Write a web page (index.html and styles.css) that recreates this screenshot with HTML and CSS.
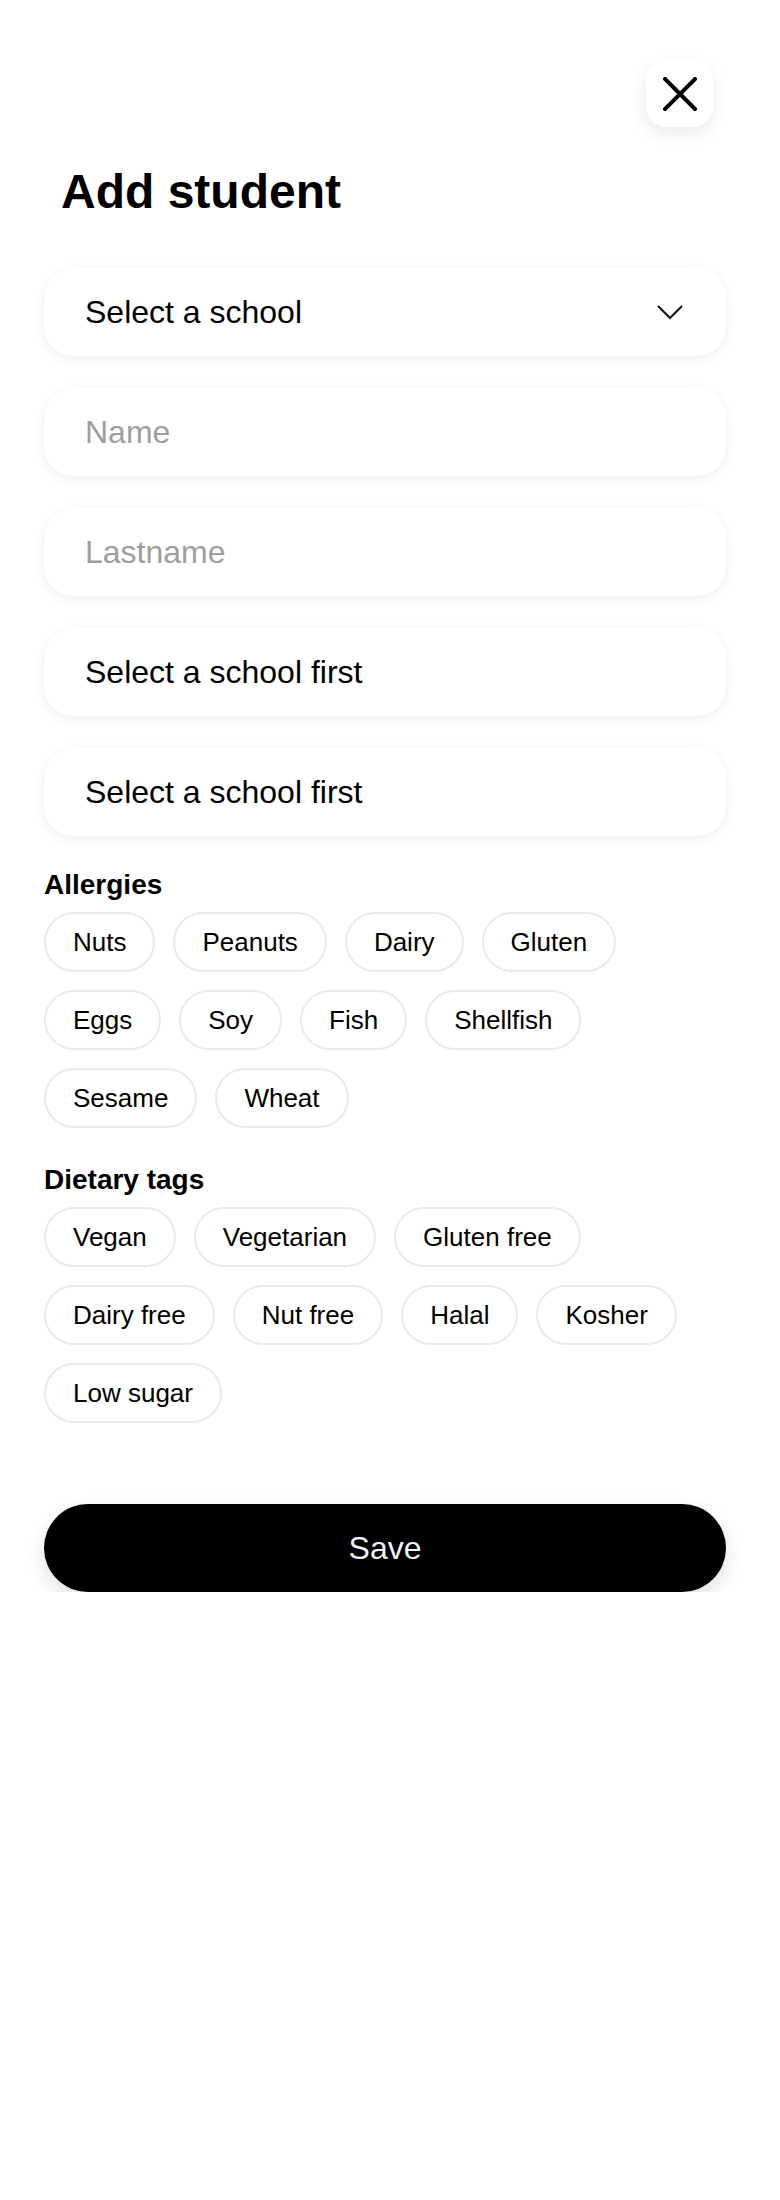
FILE: index.html
```html
<!DOCTYPE html>
<html lang="en">
<head>
    <meta charset="UTF-8">
    <meta name="viewport" content="width=device-width, initial-scale=1.0">
    <title>Add student</title>
    <link rel="stylesheet" href="styles.css">
</head>
<body>

    <!-- Top bar with close button -->
    <div class="top-bar">
        <button class="close-button" type="button" aria-label="Close">
            <svg width="34" height="34" viewBox="0 0 34 34" fill="none" stroke="#000" stroke-width="4" stroke-linecap="square">
                <path d="M2 2 L32 32 M32 2 L2 32"/>
            </svg>
        </button>
    </div>

    <h1 class="page-title">Add student</h1>

    <form class="student-form">
        <div class="field-list">
            <div class="field field-select">
                <span>Select a school</span>
                <svg class="chevron" width="26" height="15" viewBox="0 0 26 15" fill="none" stroke="#111" stroke-width="2">
                    <path d="M1 1 L13 13 L25 1"/>
                </svg>
            </div>
            <input class="field field-input" type="text" name="name" placeholder="Name">
            <input class="field field-input" type="text" name="lastname" placeholder="Lastname">
            <div class="field"><span>Select a school first</span></div>
            <div class="field"><span>Select a school first</span></div>
        </div>

        <!-- Allergies -->
        <div class="tag-section allergies">
            <h2 class="tag-title">Allergies</h2>
            <div class="tag-list">
                <span class="tag">Nuts</span>
                <span class="tag">Peanuts</span>
                <span class="tag">Dairy</span>
                <span class="tag">Gluten</span>
                <span class="tag">Eggs</span>
                <span class="tag">Soy</span>
                <span class="tag">Fish</span>
                <span class="tag">Shellfish</span>
                <span class="tag">Sesame</span>
                <span class="tag">Wheat</span>
            </div>
        </div>

        <!-- Dietary tags -->
        <div class="tag-section dietary">
            <h2 class="tag-title">Dietary tags</h2>
            <div class="tag-list">
                <span class="tag">Vegan</span>
                <span class="tag">Vegetarian</span>
                <span class="tag">Gluten free</span>
                <span class="tag">Dairy free</span>
                <span class="tag">Nut free</span>
                <span class="tag">Halal</span>
                <span class="tag">Kosher</span>
                <span class="tag">Low sugar</span>
            </div>
        </div>

        <button class="save-button" type="button">Save</button>
    </form>

</body>
</html>
```

FILE: styles.css
```css
/* Add student sheet */
body {
    margin: 0;
    font-family: "Liberation Sans", Arial, sans-serif;
    color: #000;
    background: #fff;
}

.top-bar {
    display: flex;
    justify-content: flex-end;
    padding: 60px 67px 0 0;
}

.close-button {
    width: 67px;
    height: 67px;
    border: none;
    border-radius: 20px;
    background: #fff;
    box-shadow: 0 6px 18px rgba(0, 0, 0, 0.09);
    display: flex;
    align-items: center;
    justify-content: center;
    padding: 0;
    cursor: pointer;
}

.page-title {
    margin: 37px 0 0 61px;
    font-size: 48px;
    line-height: 56px;
    font-weight: bold;
}

.student-form {
    width: 682px;
    margin: 48px 0 0 44px;
    display: flex;
    flex-direction: column;
}

.field-list {
    display: flex;
    flex-direction: column;
    gap: 32px;
}

.field {
    box-sizing: border-box;
    height: 88px;
    padding: 0 43px 0 41px;
    border: none;
    border-radius: 30px;
    background: #fff;
    box-shadow: 0 3px 12px rgba(0, 0, 0, 0.075);
    display: flex;
    align-items: center;
    justify-content: space-between;
    font-family: inherit;
    font-size: 32px;
    line-height: 40px;
    color: #000;
    outline: none;
}

.field-input::placeholder {
    color: #9e9e9e;
}

.tag-section {
    display: flex;
    flex-direction: column;
}

.allergies {
    margin-top: 33px;
}

.dietary {
    margin-top: 36px;
}

.tag-title {
    margin: 0 0 11px;
    font-size: 28px;
    line-height: 32px;
    font-weight: bold;
}

.tag-list {
    display: flex;
    flex-wrap: wrap;
    gap: 18px 18px;
}

.tag {
    box-sizing: border-box;
    height: 60px;
    padding: 13px 27px;
    border: 2px solid #e8eaee;
    border-radius: 30px;
    font-size: 26px;
    line-height: 30px;
    white-space: nowrap;
}

.save-button {
    margin-top: 81px;
    height: 88px;
    border: none;
    border-radius: 44px;
    background: #000;
    color: #eef2f8;
    font-family: inherit;
    font-size: 32px;
    box-shadow: 0 8px 20px rgba(0, 0, 0, 0.12);
    cursor: pointer;
}
```
